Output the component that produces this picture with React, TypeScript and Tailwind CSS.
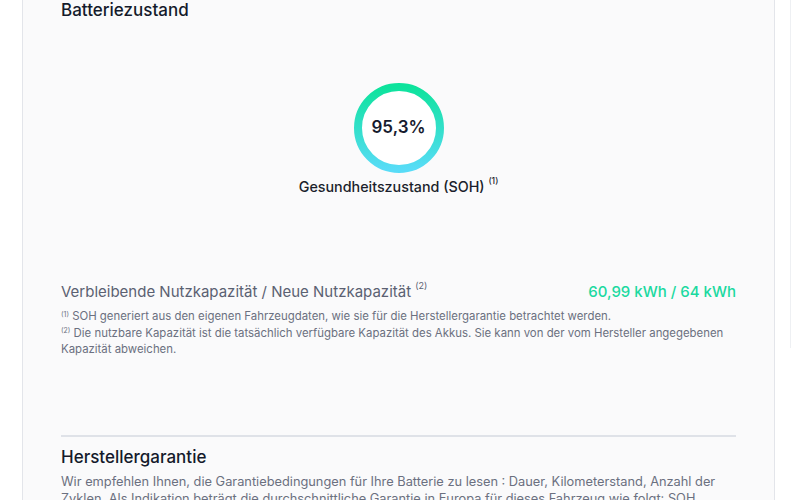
import React from 'react'

function SohRing({ value }: { value: string }) {
  return (
    <div className="relative h-[90px] w-[90px]">
      <svg width="90" height="90" viewBox="0 0 90 90" className="absolute inset-0">
        <defs>
          <linearGradient id="sohGrad" x1="0" y1="0" x2="0" y2="1">
            <stop offset="0%" stopColor="#0de39c" />
            <stop offset="100%" stopColor="#58dcf7" />
          </linearGradient>
        </defs>
        <circle cx="45" cy="45" r="41" fill="#ffffff" stroke="url(#sohGrad)" strokeWidth="8" />
      </svg>
      <div className="absolute inset-0 flex items-center justify-center text-[17px] font-semibold text-[#161b2e]">
        {value}
      </div>
    </div>
  )
}

function Sup({ n }: { n: number }) {
  return <sup className="relative -top-[2px] text-[0.6em] leading-none align-super">({n})</sup>
}

export default function App() {
  return (
    <div className="min-h-[500px] w-[800px] overflow-hidden bg-white font-['Inter',sans-serif]">
      <div className="flex">
        <div className="ml-[22px] h-[500px] w-[755px] border-x border-[#e3e5ea] bg-[#fafafb] px-[38px]">
          <h2 className="-mt-[2px] text-[17px] leading-6 font-medium text-[#141a2b]">Batteriezustand</h2>

          <div className="mt-[61px] flex flex-col items-center">
            <SohRing value="95,3%" />
            <p className="mt-[4px] text-[14.3px] leading-5 font-medium text-[#1b1f2c]">
              Gesundheitszustand (SOH) <Sup n={1} />
            </p>
          </div>

          <div className="mt-[85px] flex items-center justify-between text-[15px] leading-5">
            <p className="text-[#5b6172]">
              Verbleibende Nutzkapazität / Neue Nutzkapazität <Sup n={2} />
            </p>
            <p className="font-medium text-[#1bd9a0]">60,99 kWh / 64 kWh</p>
          </div>

          <div className="mt-[6px] text-[11.4px] leading-[16.5px] text-[#6b7080]">
            <p>
              <sup className="text-[7px] leading-none">(1)</sup> SOH generiert aus den eigenen Fahrzeugdaten, wie sie
              für die Herstellergarantie betrachtet werden.
            </p>
            <p>
              <sup className="text-[7px] leading-none">(2)</sup> Die nutzbare Kapazität ist die tatsächlich verfügbare
              Kapazität des Akkus. Sie kann von der vom Hersteller angegebenen Kapazität abweichen.
            </p>
          </div>

          <div className="mt-[77px] border-t-2 border-[#dfe2e8]" />

          <h2 className="mt-[8px] text-[17px] leading-6 font-medium text-[#141a2b]">Herstellergarantie</h2>
          <p className="mt-[4px] text-[12.8px] leading-[17px] text-[#6b7080]">
            Wir empfehlen Ihnen, die Garantiebedingungen für Ihre Batterie zu lesen : Dauer, Kilometerstand, Anzahl
            der Zyklen. Als Indikation beträgt die durchschnittliche Garantie in Europa für dieses Fahrzeug wie folgt:
            SOH größer als 70 % nach 8 Jahren oder 160.000 km.
          </p>
        </div>
        <div className="ml-[15px] h-[348px] w-[10px] border-l border-[#eef0f3]" />
      </div>
    </div>
  )
}
